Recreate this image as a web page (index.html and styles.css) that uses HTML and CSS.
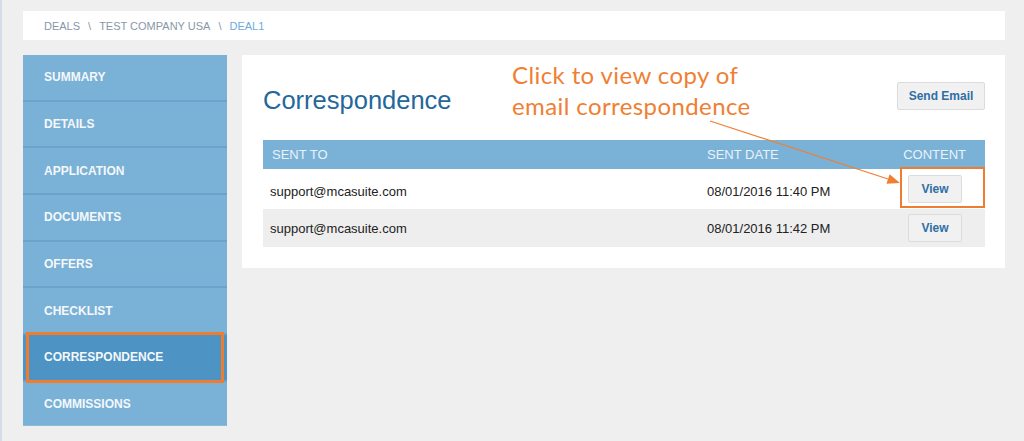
FILE: index.html
```html
<!DOCTYPE html>
<html lang="en">
<head>
    <meta charset="UTF-8">
    <meta name="viewport" content="width=device-width, initial-scale=1.0">
    <title>Correspondence</title>
    <link rel="stylesheet" href="styles.css">
</head>
<body>
    <div class="page">
        <div class="breadcrumb">
            <span>DEALS</span>
            <span class="sep">\</span>
            <span>TEST COMPANY USA</span>
            <span class="sep">\</span>
            <span class="current">DEAL1</span>
        </div>

        <div class="layout">
            <ul class="sidebar">
                <li>SUMMARY</li>
                <li>DETAILS</li>
                <li>APPLICATION</li>
                <li>DOCUMENTS</li>
                <li>OFFERS</li>
                <li>CHECKLIST</li>
                <li class="active">CORRESPONDENCE</li>
                <li>COMMISSIONS</li>
            </ul>

            <div class="card">
                <div class="card-head">
                    <h1>Correspondence</h1>
                    <button class="btn">Send Email</button>
                </div>

                <table class="mail">
                    <thead>
                        <tr>
                            <th class="to">SENT TO</th>
                            <th class="date">SENT DATE</th>
                            <th class="content">CONTENT</th>
                        </tr>
                    </thead>
                    <tbody>
                        <tr class="first">
                            <td>support@mcasuite.com</td>
                            <td>08/01/2016 11:40 PM</td>
                            <td class="content marked"><button class="btn">View</button></td>
                        </tr>
                        <tr class="alt">
                            <td>support@mcasuite.com</td>
                            <td>08/01/2016 11:42 PM</td>
                            <td class="content"><button class="btn">View</button></td>
                        </tr>
                    </tbody>
                </table>

                <!-- annotation -->
                <div class="note">Click to view copy of<br>email correspondence</div>
                <svg class="arrow" width="763" height="213" viewBox="0 0 763 213">
                    <line x1="468" y1="66" x2="646" y2="124" stroke="#ef7f33" stroke-width="1.2"/>
                    <polygon points="658,128 644.5,128.8 647.6,119.3" fill="#ef7f33"/>
                </svg>
            </div>
        </div>
    </div>
</body>
</html>
```

FILE: styles.css
```css
body {
    margin: 0;
    font-family: "Liberation Sans", Arial, sans-serif;
    background-color: #efefef;
    color: #222222;
}

.page {
    min-height: 441px;
    border-left: 2px solid #d2dde7;
    padding: 11px 19px 0 21px;
    box-sizing: border-box;
}

.breadcrumb {
    height: 29px;
    display: flex;
    align-items: center;
    padding-left: 21px;
    background-color: #ffffff;
    font-size: 11px;
    color: #8897a9;
}

.breadcrumb .sep {
    margin: 0 8px;
}

.breadcrumb .current {
    color: #6faadb;
}

.layout {
    display: flex;
    align-items: flex-start;
    gap: 15px;
    margin-top: 15px;
}

.sidebar {
    width: 204px;
    margin: 0;
    padding: 0;
    list-style: none;
    background-color: #7ab1d6;
    flex-shrink: 0;
}

.sidebar li {
    position: relative;
    height: 44.7px;
    display: flex;
    align-items: center;
    padding-left: 21px;
    border-bottom: 2px solid #6da3ca;
    font-size: 12px;
    font-weight: bold;
    color: #f4f8fb;
}

.sidebar li:last-child {
    height: 43.5px;
    border-bottom: 1px solid #8cbadb;
}

.sidebar li.active {
    background-color: #4d93c3;
}

.sidebar li.active::after {
    content: "";
    position: absolute;
    top: -3px;
    left: 3px;
    right: 3px;
    bottom: -3px;
    border: 3px solid #ee7d31;
}

.card {
    position: relative;
    flex: 1;
    background-color: #ffffff;
    padding: 27px 20px 21px 21px;
}

.card-head {
    height: 58px;
    display: flex;
    justify-content: space-between;
    align-items: flex-start;
}

.card-head h1 {
    margin: 4px 0 0 0;
    font-size: 25.5px;
    line-height: 28px;
    font-weight: normal;
    color: #24679a;
}

.btn {
    font-family: "Liberation Sans", Arial, sans-serif;
    font-size: 12px;
    font-weight: bold;
    color: #2f6fa5;
    background-color: #f1f1f1;
    border: 1px solid #dcdcdc;
    border-radius: 2px;
    height: 28px;
    padding: 0 10px;
    white-space: nowrap;
}

.card-head .btn {
    width: 88px;
}

.mail {
    width: 100%;
    border-collapse: collapse;
    font-size: 13px;
}

.mail th {
    height: 29px;
    padding: 0 9px;
    background-color: #7ab1d6;
    color: #eaf2f9;
    font-weight: normal;
    text-align: left;
}

.mail th.to {
    width: 417px;
}

.mail th.date {
    width: 169px;
}

.mail th.content {
    text-align: right;
    padding-right: 19px;
}

.mail td {
    height: 38px;
    padding: 0 9px 0 7px;
}

.mail tr.first td {
    height: 40px;
    padding-top: 4px;
    box-sizing: border-box;
}

.mail td + td {
    padding-left: 9px;
}

.mail tr.alt td {
    background-color: #eeeeee;
}

.mail td.content,
.mail tr.first td.content {
    text-align: center;
    padding: 0;
}

.mail td.content .btn {
    width: 54px;
    padding: 0;
}

.mail td.marked {
    position: relative;
}

.mail td.marked::after {
    content: "";
    position: absolute;
    top: -2px;
    left: 15px;
    right: 0;
    bottom: 1px;
    border: 2.5px solid #ee7d31;
}

.note {
    position: absolute;
    left: 270px;
    top: 4px;
    font-family: Lato, "Open Sans", sans-serif;
    font-size: 24px;
    letter-spacing: 0.4px;
    line-height: 31px;
    color: #ef7f33;
}

.arrow {
    position: absolute;
    left: 0;
    top: 0;
    pointer-events: none;
}
```
